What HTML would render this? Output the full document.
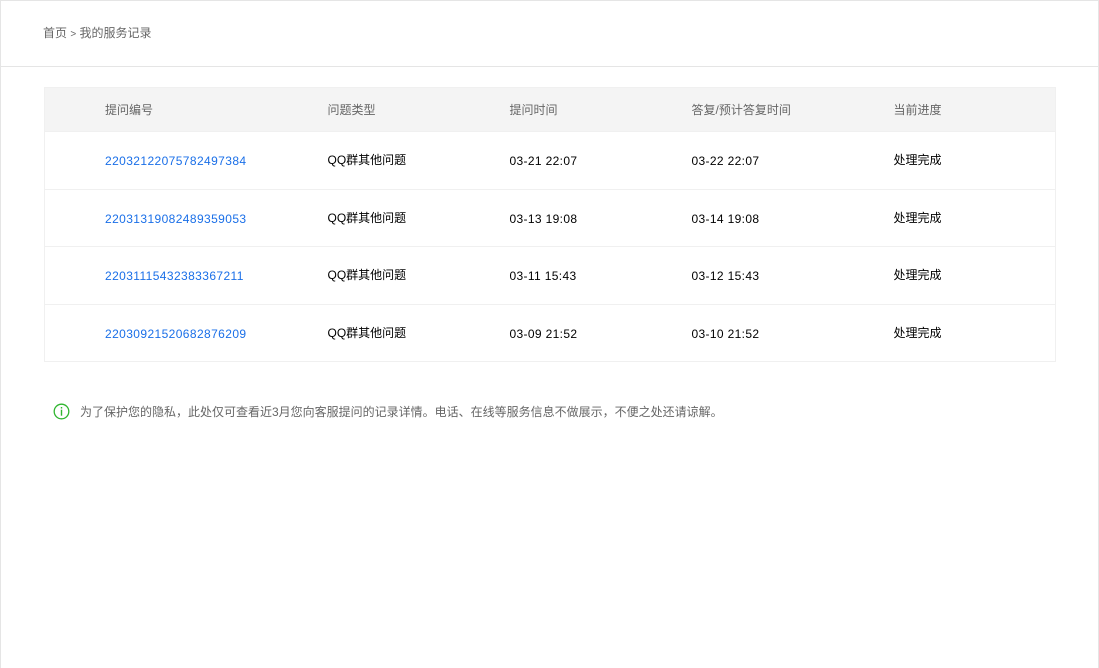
<!DOCTYPE html>
<html><head><meta charset="utf-8"><style>
*{margin:0;padding:0;box-sizing:border-box}
body{width:1099px;height:668px;background:#fff;font-family:"Liberation Sans","Noto Sans CJK SC",sans-serif;font-size:12px;color:#000;overflow:hidden}
.page{position:absolute;left:0;top:0;width:1099px;height:668px;border:1px solid #e5e5e5;border-bottom:none}
.hd{height:66px;border-bottom:1px solid #e5e5e5;padding:24px 0 0 42px;color:#666;font-size:12px;line-height:16px}
table{position:absolute;left:43px;top:86px;width:1012px;border-collapse:collapse;border:1px solid #f0f0f0}
th{background:#f4f4f4;height:44px;font-weight:normal;color:#666;text-align:left}
td{height:57.5px;border-top:1px solid #f0f0f0;text-align:left;letter-spacing:0.35px;line-height:16px}
td span{position:relative;top:1px}
th:nth-child(1),td:nth-child(1){padding-left:60px;width:283px}
th:nth-child(2),td:nth-child(2){width:182px}
th:nth-child(3),td:nth-child(3){width:182px}
th:nth-child(4),td:nth-child(4){width:202px}
td:nth-child(2),td:nth-child(5){letter-spacing:0}
a{color:#1a6fe8;text-decoration:none;letter-spacing:0.4px;position:relative;top:1px}
.tip{position:absolute;left:52px;top:402px;color:#666;line-height:16px;display:flex;align-items:center}
.tip svg{margin-right:10px}
</style></head><body><div class="page">
<div class="hd">首页 <span style="font-size:10px">&gt;</span> 我的服务记录</div>
<table>
<tr><th>提问编号</th><th>问题类型</th><th>提问时间</th><th>答复/预计答复时间</th><th>当前进度</th></tr>
<tr><td><a>22032122075782497384</a></td><td>QQ群其他问题</td><td><span>03-21 22:07</span></td><td><span>03-22 22:07</span></td><td>处理完成</td></tr>
<tr><td><a>22031319082489359053</a></td><td>QQ群其他问题</td><td><span>03-13 19:08</span></td><td><span>03-14 19:08</span></td><td>处理完成</td></tr>
<tr><td><a>22031115432383367211</a></td><td>QQ群其他问题</td><td><span>03-11 15:43</span></td><td><span>03-12 15:43</span></td><td>处理完成</td></tr>
<tr><td><a>22030921520682876209</a></td><td>QQ群其他问题</td><td><span>03-09 21:52</span></td><td><span>03-10 21:52</span></td><td>处理完成</td></tr>
</table>
<div class="tip"><svg width="17" height="17" viewBox="0 0 17 17"><circle cx="8.5" cy="8.5" r="7.3" fill="none" stroke="#2fb52f" stroke-width="1.3"/><rect x="7.8" y="4" width="1.4" height="1.5" fill="#2fb52f"/><rect x="7.8" y="6.7" width="1.4" height="6" fill="#2fb52f"/></svg>为了保护您的隐私，此处仅可查看近3月您向客服提问的记录详情。电话、在线等服务信息不做展示，不便之处还请谅解。</div>
</div></body></html>
